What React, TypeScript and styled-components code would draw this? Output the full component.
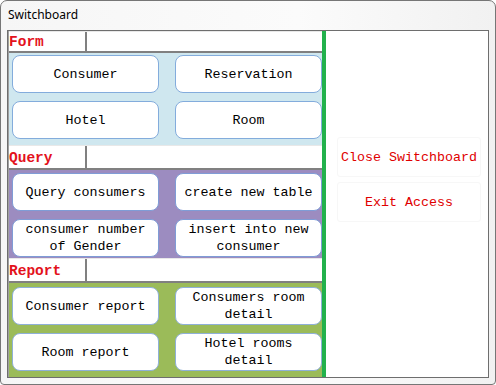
import styled, { createGlobalStyle } from 'styled-components';

const GlobalStyle = createGlobalStyle`
  html, body {
    margin: 0;
    padding: 0;
    background: #ffffff;
  }
  * {
    box-sizing: border-box;
  }
`;

type Section = {
  title: string;
  bg: string;
  border: string;
  headerHeight: number;
  height: number;
  padTop: number;
  items: string[];
};

const sections: Section[] = [
  {
    title: 'Form',
    bg: '#cfe7ef',
    border: '#83acdc',
    headerHeight: 22,
    height: 92,
    padTop: 2,
    items: ['Consumer', 'Reservation', 'Hotel', 'Room'],
  },
  {
    title: 'Query',
    bg: '#9c8cc0',
    border: '#7f9cd6',
    headerHeight: 25,
    height: 88,
    padTop: 3,
    items: ['Query consumers', 'create new table', 'consumer number\nof Gender', 'insert into new\nconsumer'],
  },
  {
    title: 'Report',
    bg: '#9bbb59',
    border: '#8fb0d8',
    headerHeight: 25,
    height: 0,
    padTop: 4,
    items: ['Consumer report', 'Consumers room\ndetail', 'Room report', 'Hotel rooms\ndetail'],
  },
];

export default function App() {
  return (
    <>
      <GlobalStyle />
      <Window>
        <TitleBar>Switchboard</TitleBar>
        <Client>
          <LeftColumn>
            {sections.map((s) => (
              <div key={s.title} style={{ display: 'contents' }}>
                <SectionHeader $height={s.headerHeight}>
                  <HeaderLabel>{s.title}</HeaderLabel>
                </SectionHeader>
                <SectionBody $bg={s.bg} $height={s.height} $padTop={s.padTop}>
                  {s.items.map((item) => (
                    <ItemButton key={item} $border={s.border}>
                      {item}
                    </ItemButton>
                  ))}
                </SectionBody>
              </div>
            ))}
          </LeftColumn>
          <RightPanel>
            <ActionButton>Close Switchboard</ActionButton>
            <ActionButton>Exit Access</ActionButton>
          </RightPanel>
        </Client>
      </Window>
    </>
  );
}

const Window = styled.div`
  width: 496px;
  height: 385px;
  border: 1px solid #767676;
  border-radius: 7px 7px 4px 4px;
  background: linear-gradient(90deg, #f6f6f6 0%, #fbfbfb 60%, #f1f1f1 100%);
  display: flex;
  flex-direction: column;
  padding: 0 6px 6px 6px;
`;

const TitleBar = styled.div`
  height: 29px;
  display: flex;
  align-items: center;
  padding: 0 0 3px 1px;
  font-family: 'Noto Sans', 'Liberation Sans', sans-serif;
  font-size: 12px;
  color: #000;
`;

const Client = styled.div`
  flex: 1;
  display: flex;
  border: 1px solid #6e6e6e;
  background: #ffffff;
`;

const LeftColumn = styled.div`
  width: 318px;
  display: flex;
  flex-direction: column;
  border-right: 4px solid #22b14c;
  border-left: 1px solid #a0a0a0;
`;

const SectionHeader = styled.div<{ $height: number }>`
  height: ${(p) => p.$height}px;
  display: flex;
  border-bottom: 2px solid #808080;
  border-top: 1px solid #e8e8e8;
  background: #ffffff;
`;

const HeaderLabel = styled.div`
  width: 78px;
  border-right: 2px solid #808080;
  display: flex;
  align-items: center;
  padding-top: 1px;
  font-family: 'Liberation Mono', 'DejaVu Sans Mono', monospace;
  font-weight: bold;
  font-size: 14.5px;
  color: #e3121c;
`;

const SectionBody = styled.div<{ $bg: string; $height: number; $padTop: number }>`
  ${(p) => (p.$height ? `height: ${p.$height}px;` : 'flex: 1;')}
  background: ${(p) => p.$bg};
  display: grid;
  grid-template-columns: 147px 147px;
  grid-auto-rows: 38px;
  column-gap: 16px;
  row-gap: 8px;
  padding: ${(p) => p.$padTop}px 0 0 3px;
`;

const ItemButton = styled.div<{ $border: string }>`
  background: #ffffff;
  border: 1px solid ${(p) => p.$border};
  border-radius: 8px;
  display: flex;
  align-items: center;
  justify-content: center;
  text-align: center;
  white-space: pre-line;
  font-family: 'Liberation Mono', 'DejaVu Sans Mono', monospace;
  font-size: 13.33px;
  line-height: 17px;
  color: #000;
`;

const RightPanel = styled.div`
  flex: 1;
  display: flex;
  flex-direction: column;
  gap: 5px;
  padding: 106px 0 0 11px;
`;

const ActionButton = styled.div`
  width: 144px;
  height: 40px;
  border: 1px solid #f7f7f7;
  border-radius: 3px;
  display: flex;
  align-items: center;
  justify-content: center;
  font-family: 'Liberation Mono', 'DejaVu Sans Mono', monospace;
  font-size: 13.33px;
  color: #e00000;
`;
